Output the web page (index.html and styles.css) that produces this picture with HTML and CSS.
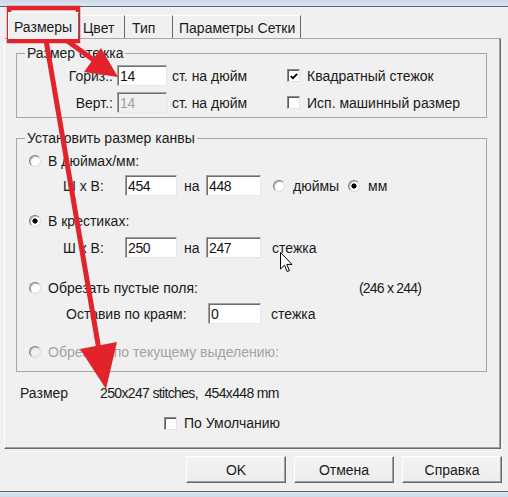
FILE: index.html
```html
<!DOCTYPE html>
<html lang="ru">
<head>
<meta charset="utf-8">
<title>Размеры</title>
<link rel="stylesheet" href="styles.css">
</head>
<body>
<div class="win-top"></div>
<div class="tabs">
  <div class="tab tab-active">Размеры</div>
  <div class="tab tab-color">Цвет</div>
  <div class="tab tab-type">Тип</div>
  <div class="tab tab-grid">Параметры Сетки</div>
</div>
<div class="panel">
  <fieldset class="group group-stitch">
    <legend>Размер стежка</legend>
    <div class="row stitch-row">
      <span class="stitch-label">Гориз.:</span>
      <span class="field field-stitch">14</span>
      <span class="unit">ст. на дюйм</span>
      <span class="check checked"><svg viewBox="0 0 11 11" width="11" height="11"><path d="M2 5 L4.3 7.3 L9 2.5" fill="none" stroke="#000" stroke-width="2"/></svg></span>
      <span class="check-text">Квадратный стежок</span>
    </div>
    <div class="row stitch-row stitch-row-2">
      <span class="stitch-label">Верт.:</span>
      <span class="field field-stitch field-disabled">14</span>
      <span class="unit">ст. на дюйм</span>
      <span class="check"></span>
      <span class="check-text">Исп. машинный размер</span>
    </div>
  </fieldset>

  <fieldset class="group group-canvas">
    <legend>Установить размер канвы</legend>
    <div class="row radio-row rr-1">
      <span class="radio"></span>
      <span class="radio-text">В дюймах/мм:</span>
    </div>
    <div class="row dim-row dr-1">
      <span class="dim-label">Ш x В:</span>
      <span class="field field-a">454</span>
      <span class="na">на</span>
      <span class="field field-b">448</span>
      <span class="opt opt-inch"><span class="radio"></span><span class="opt-text">дюймы</span></span>
      <span class="opt"><span class="radio on"></span><span class="opt-text">мм</span></span>
    </div>
    <div class="row radio-row rr-2">
      <span class="radio on"></span>
      <span class="radio-text">В крестиках:</span>
    </div>
    <div class="row dim-row dr-2">
      <span class="dim-label">Ш x В:</span>
      <span class="field field-a">250</span>
      <span class="na">на</span>
      <span class="field field-b">247</span>
      <span class="after">стежка</span>
    </div>
    <div class="row radio-row rr-3">
      <span class="radio"></span>
      <span class="radio-text crop-text">Обрезать пустые поля:</span>
      <span class="crop-size">(246 x 244)</span>
    </div>
    <div class="row dim-row dr-3">
      <span class="margin-label">Оставив по краям:</span>
      <span class="field field-margin">0</span>
      <span class="after">стежка</span>
    </div>
    <div class="row radio-row rr-4 disabled">
      <span class="radio radio-disabled"></span>
      <span class="radio-text">Обрезать по текущему выделению:</span>
    </div>
  </fieldset>

  <div class="row size-row">
    <span class="size-label">Размер</span>
    <span class="size-value">250x247 stitches,&nbsp; 454x448 mm</span>
  </div>
  <div class="row default-row">
    <span class="check"></span>
    <span class="check-text">По Умолчанию</span>
  </div>
</div>
<div class="buttons">
  <div class="btn">OK</div>
  <div class="btn">Отмена</div>
  <div class="btn">Справка</div>
</div>
<div class="win-bottom"></div>

<svg class="cursor" width="14" height="22" viewBox="0 0 14 22"><path d="M0.5 0.5 L0.5 17 L4.5 13.2 L7.2 19.6 L9.4 18.7 L6.8 12.4 L12 12.4 Z" fill="#fff" stroke="#000" stroke-width="1" stroke-linejoin="miter"/></svg>

<svg class="annot" width="508" height="497" viewBox="0 0 508 497">
  <rect x="9" y="8" width="69" height="33" fill="none" stroke="#e3232b" stroke-width="4.5"/>
  <line x1="46" y1="40" x2="99" y2="350" stroke="#e3232b" stroke-width="5"/>
  <polygon points="106,389 80,349 117,342" fill="#e3232b"/>
  <line x1="66" y1="40" x2="95" y2="61" stroke="#e3232b" stroke-width="5"/>
  <polygon points="118,77 101,48 84,72" fill="#e3232b"/>
</svg>
</body>
</html>
```

FILE: styles.css
```css
* { box-sizing: border-box; }
html, body { margin: 0; padding: 0; }
body {
  position: relative;
  width: 508px;
  height: 497px;
  overflow: hidden;
  background: #f0f0f0;
  font-family: "Liberation Sans", Arial, sans-serif;
  font-size: 14px;
  line-height: 16px;
  color: #1a1a1a;
  display: flex;
  flex-direction: column;
}

.win-top {
  flex: none;
  height: 7px;
  background: linear-gradient(#cbd9e8, #dce6f1);
  border-bottom: 1px solid #5f6368;
}
.win-bottom {
  flex: none;
  margin-top: auto;
  height: 6px;
  background: linear-gradient(#dce6f1, #cbd9e8);
  border-top: 1px solid #5f6368;
}

/* tabs */
.tabs {
  flex: none;
  display: flex;
  align-items: flex-end;
  height: 31px;
  padding-left: 8px;
}
.tab {
  height: 23px;
  padding-top: 4px;
  padding-left: 5px;
  border-top: 1px solid #fff;
  border-right: 1px solid #6a6a6a;
  white-space: nowrap;
}
.tab-active {
  position: relative;
  z-index: 1;
  width: 71px;
  height: 27px;
  margin-bottom: -1px;
  padding-top: 6px;
  background: #f0f0f0;
  border-left: 1px solid #fff;
}
.tab-color { width: 46px; padding-left: 4px; }
.tab-type { width: 48px; padding-left: 7px; }
.tab-grid { width: 128px; padding-left: 6px; }

/* panel */
.panel {
  flex: none;
  margin-left: 4px;
  width: 497px;
  height: 411px;
  padding: 6px 13px 0 11px;
  border-top: 1px solid #a9a9a9;
  border-left: 1px solid #fff;
  border-right: 1px solid #6a6a6a;
  border-bottom: 1px solid #6a6a6a;
  box-shadow: inset -1px -1px 0 #a0a0a0;
}

.group {
  margin: 0;
  padding: 0 8px 4px 8px;
  border: 1px solid #a7a7a7;
  min-width: 0;
}
.group legend {
  padding: 0 2px;
  margin: 0;
  line-height: 16px;
}
.group-canvas {
  margin-top: 12px;
  padding-bottom: 11px;
}

.row {
  display: flex;
  align-items: center;
  white-space: nowrap;
}

/* stitch group */
.stitch-row { margin-top: 4px; height: 21px; }
.stitch-row-2 { margin-top: 6px; }
.stitch-label { width: 88px; text-align: right; margin-right: 4px; }
.unit { width: 115px; margin-left: 5px; }
.check-text { margin-left: 7px; }

/* fields */
.field {
  display: flex;
  align-items: center;
  height: 21px;
  padding-left: 2px;
  background: #fff;
  border-top: 1px solid #a0a0a0;
  border-left: 1px solid #a0a0a0;
  border-right: 1px solid #e6e6e6;
  border-bottom: 1px solid #e6e6e6;
  box-shadow: inset 1px 1px 0 #6f6f6f;
  color: #111;
  letter-spacing: -0.4px;
}
.field-disabled { background: #f0f0f0; color: #a0a0a0; }
.field-stitch { width: 50px; }
.field-a { width: 52px; }
.field-b { width: 55px; }
.field-margin { width: 53px; }

/* checkbox */
.check {
  flex: none;
  width: 13px;
  height: 13px;
  background: #fff;
  border-top: 1px solid #8a8a8a;
  border-left: 1px solid #8a8a8a;
  border-right: 1px solid #e3e3e3;
  border-bottom: 1px solid #e3e3e3;
  box-shadow: inset 1px 1px 0 #5a5a5a;
  display: flex;
  align-items: center;
  justify-content: center;
}
.check svg { display: block; margin: 1px 0 0 1px; }

/* radio */
.radio {
  flex: none;
  width: 12px;
  height: 12px;
  border-radius: 50%;
  background: #fff;
  border: 1px solid;
  border-color: #7c7c7c #dcdcdc #dcdcdc #7c7c7c;
  box-shadow: inset 1px 1px 0 #bdbdbd;
}
.radio.on {
  background: radial-gradient(circle at 50% 50%, #000 0, #000 2.3px, #fff 2.9px);
}
.radio-disabled { background: #f0f0f0; }

.radio-row { height: 16px; }
.radio-row .radio { margin-left: 4px; }
.radio-text { margin-left: 7px; }
.rr-1 { margin-top: 7px; }
.rr-2 { margin-top: 17px; }
.rr-3 { margin-top: 22px; }
.rr-4 { margin-top: 20px; }
.disabled { color: #a3a3a3; }

.crop-text { width: 311px; }
.crop-size { letter-spacing: -0.8px; }

.dim-row { height: 21px; }
.dr-1 { margin-top: 6px; }
.dr-2 { margin-top: 8px; }
.dr-3 { margin-top: 7px; }
.dim-label { width: 62px; margin-left: 38px; }
.na { width: 22px; margin-left: 7px; }
.margin-label { width: 142px; margin-left: 41px; }
.after { margin-left: 11px; }
.dr-3 .after { margin-left: 10px; }

.opt { display: flex; align-items: center; }
.opt-inch { width: 75px; margin-left: 12px; }
.opt-text { margin-left: 8px; }

/* bottom of panel */
.size-row { margin-top: 13px; padding-left: 4px; height: 16px; }
.size-label { width: 80px; }
.size-value { letter-spacing: -0.65px; }
.default-row { margin-top: 14px; padding-left: 148px; height: 16px; }

/* buttons */
.buttons {
  flex: none;
  display: flex;
  justify-content: flex-end;
  gap: 8px;
  margin-top: 7px;
  padding-right: 6px;
}
.btn {
  width: 100px;
  height: 27px;
  display: flex;
  align-items: center;
  justify-content: center;
  background: linear-gradient(#f4f4f4, #ececec);
  border-top: 1px solid #fff;
  border-left: 1px solid #fff;
  border-right: 1px solid #6a6a6a;
  border-bottom: 1px solid #6a6a6a;
  box-shadow: inset -1px -1px 0 #a0a0a0;
}

/* overlays */
.cursor {
  position: absolute;
  left: 280px;
  top: 252px;
}
.annot {
  position: absolute;
  left: 0;
  top: 0;
  pointer-events: none;
}
```
